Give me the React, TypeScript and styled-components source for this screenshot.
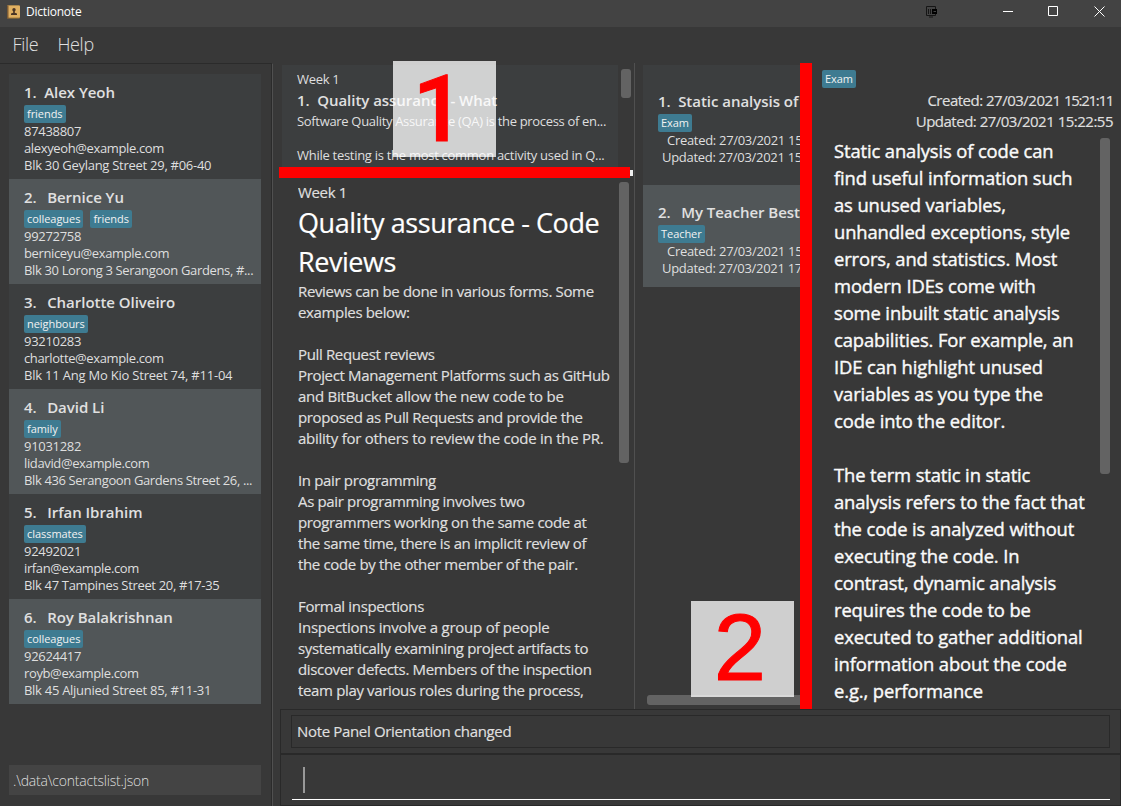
import React from "react";
import styled, { createGlobalStyle, css } from "styled-components";

const Global = createGlobalStyle`
  * { box-sizing: border-box; }
  body { margin: 0; background: #383838; overflow: hidden; }
`;

const Window = styled.div`
  width: 1121px;
  height: 806px;
  display: flex;
  flex-direction: column;
  background: #383838;
  color: #dfdfdf;
  font-family: "Open Sans", "Noto Sans", sans-serif;
  overflow: hidden;
  white-space: pre;
`;

const TitleBar = styled.header`
  height: 27px;
  flex: none;
  display: flex;
  align-items: center;
  background: #434343;
  padding: 0 16px 4px 6px;
`;

const AppTitle = styled.span`
  margin-left: 6px;
  font-size: 12px;
  line-height: 16px;
  color: #fff;
  letter-spacing: -0.22px;
`;

const WindowControls = styled.div`
  margin: -2px 0 0 auto;
  display: flex;
  align-items: center;
`;

const MenuBar = styled.nav`
  height: 36px;
  flex: none;
  display: flex;
  align-items: center;
  gap: 19px;
  padding: 0 13px 2px 12.5px;
  font-size: 18px;
  font-weight: 300;
  letter-spacing: -0.3px;
  color: #e0e0e0;
`;

const Body = styled.div`
  flex: 1;
  min-height: 0;
  display: flex;
`;

const Sidebar = styled.aside`
  width: 273px;
  flex: none;
  display: flex;
  flex-direction: column;
  justify-content: space-between;
  padding: 10px 11px 11px 9px;
  border-top: 1px solid #2b2b2b;
  border-right: 1px solid #505050;
  box-shadow: inset -1px 0 #2b2b2b;
`;

const Card = styled.article<{ $alt?: boolean; $height: number; $top: number }>`
  height: ${(p) => p.$height}px;
  padding: ${(p) => p.$top}px 0 0 15px;
  background: ${(p) => (p.$alt ? "#515658" : "#3c3e3f")};
  overflow: hidden;
`;

const CardTitle = styled.div<{ $gap?: number }>`
  margin-top: ${(p) => p.$gap ?? 0}px;
  height: 22px;
  font-size: 15px;
  line-height: 18px;
  font-weight: 600;
  letter-spacing: -0.03px;
  color: #e0e0e0;
`;

const IndexLabel = styled.span<{ $narrow: boolean }>`
  margin-right: ${(p) => (p.$narrow ? 7.5 : 10.5)}px;
`;

const Index = ({ n }: { n: number }) => <IndexLabel $narrow={n === 1}>{n}.</IndexLabel>;

const Tags = styled.div`
  display: flex;
  gap: 7px;
  height: 18px;
`;

const Tag = styled.span`
  height: 18px;
  padding: 0 3px;
  border-radius: 2px;
  background: #3e7b91;
  color: #f2f2f2;
  font-size: 11px;
  line-height: 18px;
  letter-spacing: -0.05px;
`;

const Small = styled.div<{ $indent?: number; $tracking?: number }>`
  padding-left: ${(p) => p.$indent ?? 0}px;
  height: 17px;
  font-size: 13px;
  line-height: 17px;
  letter-spacing: ${(p) => p.$tracking ?? -0.3}px;
`;

const FilePath = styled.div`
  height: 30px;
  padding-left: 4px;
  background: #444;
  font-size: 14px;
  line-height: 32px;
  font-weight: 300;
  letter-spacing: -0.2px;
`;

const Main = styled.main`
  flex: 1;
  min-width: 0;
  display: flex;
  flex-direction: column;
  padding-left: 6px;
`;

const Panels = styled.div`
  height: 646px;
  flex: none;
  display: flex;
`;

const ContentPanel = styled.section`
  width: 356px;
  flex: none;
  display: flex;
  flex-direction: column;
  border-right: 1px solid #505050;
`;

const ContentList = styled.div`
  position: relative;
  height: 104px;
  flex: none;
  display: flex;
  justify-content: space-between;
  padding: 2px 3px 0 3px;
`;

const ContentCard = styled.article`
  width: 336px;
  padding: 6px 0 0 15px;
  background: #3c3e3f;
`;

const Thumb = styled.div<{ $w: number; $h: number; $top?: number }>`
  width: ${(p) => p.$w}px;
  height: ${(p) => p.$h}px;
  margin-top: ${(p) => p.$top ?? 0}px;
  flex: none;
  border-radius: 3px;
  background: #636363;
`;

const Splitter = styled.div<{ $vertical?: boolean }>`
  flex: none;
  background: #f00;
  ${(p) =>
    p.$vertical
      ? css`
          width: 12px;
        `
      : css`
          width: 351px;
          height: 11px;
          position: relative;
          &::after {
            content: "";
            position: absolute;
            left: 351px;
            top: 3px;
            width: 3px;
            height: 6px;
            background: #f0f0f0;
          }
        `}
`;

const Reader = styled.div`
  flex: 1;
  min-height: 0;
  display: flex;
  padding: 4px 5px 0 19px;
`;

const ReaderText = styled.div`
  width: 321px;
  overflow: hidden;
  font-size: 15px;
  line-height: 21px;
  letter-spacing: -0.35px;
  -webkit-text-stroke: 0.2px currentColor;
`;

const Loose = styled.span`
  letter-spacing: -0.25px;
`;

const Heading = styled.h1`
  margin: 0;
  padding: 1px 0 0;
  font-size: 27px;
  line-height: 38.5px;
  font-weight: 400;
  letter-spacing: -0.45px;
  color: #fff;
`;

const Callout = styled.div<{
  $left: number;
  $top: number;
  $face: string;
  $weight: number;
  $size: number;
  $line: number;
  $inset: number;
}>`
  position: absolute;
  left: ${(p) => p.$left}px;
  top: ${(p) => p.$top}px;
  width: 103px;
  height: 96px;
  z-index: 2;
  padding-right: ${(p) => p.$inset}px;
  background: rgba(255, 255, 255, 0.76);
  color: #f00;
  font-family: ${(p) => p.$face}, sans-serif;
  font-size: ${(p) => p.$size}px;
  font-weight: ${(p) => p.$weight};
  line-height: ${(p) => p.$line}px;
  text-align: center;
  -webkit-text-stroke: 1px #f00;
`;

const NotePanel = styled.section`
  position: relative;
  width: 165px;
  flex: none;
  display: flex;
  flex-direction: column;
  justify-content: space-between;
  padding: 2px 0 4px 8px;
`;

const HorizontalThumb = styled.div`
  height: 10px;
  margin-left: 4px;
  border-radius: 3px 0 0 3px;
  background: #636363;
`;

const Detail = styled.section`
  flex: 1;
  display: flex;
  flex-direction: column;
  padding: 7px 8px 0 10px;
`;

const Meta = styled.div`
  padding-top: 2px;
  text-align: right;
  font-size: 15px;
  line-height: 21px;
  letter-spacing: -0.5px;
  -webkit-text-stroke: 0.2px currentColor;
`;

const Tight = styled.span`
  letter-spacing: -1.3px;
`;

const NoteScroll = styled.div`
  display: flex;
  justify-content: space-between;
  padding: 6px 3px 0 12px;
`;

const NoteText = styled.div`
  margin-top: -1px;
  font-size: 18.4px;
  line-height: 27px;
  letter-spacing: -0.12px;
  color: #fafafa;
  -webkit-text-stroke: 0.4px currentColor;
`;

const Console = styled.footer`
  flex: 1;
  margin-left: 1px;
  display: flex;
  flex-direction: column;
  border: 1px solid #292929;
`;

const Result = styled.div`
  height: 44px;
  padding: 5px 10px;
  border-bottom: 1px solid #292929;
`;

const ResultText = styled.div`
  height: 33px;
  padding-left: 5px;
  border: 1px solid #292929;
  font-size: 15px;
  line-height: 31px;
  letter-spacing: -0.34px;
  -webkit-text-stroke: 0.2px currentColor;
`;

const Command = styled.div`
  flex: 1;
  border-top: 1px solid #292929;
  padding: 0 10px 5px 11px;
  display: flex;
`;

const CommandField = styled.div`
  flex: 1;
  padding: 12px 0 0 11px;
  border-bottom: 1px solid #fff;
`;

const Caret = styled.div`
  width: 2px;
  height: 26px;
  background: #989898;
`;

interface Contact {
  name: string;
  tags: string[];
  phone: string;
  email: string;
  address: string;
  tracking?: number;
}

const contacts: Contact[] = [
  { name: "Alex Yeoh", tags: ["friends"], phone: "87438807", email: "alexyeoh@example.com", address: "Blk 30 Geylang Street 29, #06-40", tracking: -0.27 },
  { name: "Bernice Yu", tags: ["colleagues", "friends"], phone: "99272758", email: "berniceyu@example.com", address: "Blk 30 Lorong 3 Serangoon Gardens, #...", tracking: -0.35 },
  { name: "Charlotte Oliveiro", tags: ["neighbours"], phone: "93210283", email: "charlotte@example.com", address: "Blk 11 Ang Mo Kio Street 74, #11-04", tracking: -0.21 },
  { name: "David Li", tags: ["family"], phone: "91031282", email: "lidavid@example.com", address: "Blk 436 Serangoon Gardens Street 26, ...", tracking: -0.37 },
  { name: "Irfan Ibrahim", tags: ["classmates"], phone: "92492021", email: "irfan@example.com", address: "Blk 47 Tampines Street 20, #17-35", tracking: -0.33 },
  { name: "Roy Balakrishnan", tags: ["colleagues"], phone: "92624417", email: "royb@example.com", address: "Blk 45 Aljunied Street 85, #11-31", tracking: -0.28 },
];

const noteText = `Static analysis of code can
find useful information such
as unused variables,
unhandled exceptions, style
errors, and statistics. Most
modern IDEs come with
some inbuilt static analysis
capabilities. For example, an
IDE can highlight unused
variables as you type the
code into the editor.

The term static in static
analysis refers to the fact that
the code is analyzed without
executing the code. In
contrast, dynamic analysis
requires the code to be
executed to gather additional
information about the code
e.g., performance`;

const BookIcon = () => (
  <svg width="14" height="14" viewBox="0 0 14 14">
    <rect x="1" y="0.500" width="13" height="13" rx="1" fill="#a87a35" />
    <rect x="1" y="0.500" width="13" height="12" rx="1" fill="#e0b062" />
    <rect x="1" y="0.500" width="1.500" height="13" fill="#7a5a35" />
    <circle cx="8" cy="4.800" r="1.700" fill="#4a3525" />
    <path d="M7.200 6h1.600v1.800l2.200.7V10H5V8.500l2.200-.7z" fill="#4a3525" />
  </svg>
);

const ControlIcons = () => (
  <svg width="182" height="16" viewBox="0 0 182 16" fill="none">
    <path d="M12.500 6V3.500H3.500V12.500H12.500V11M6 14H10" stroke="#161616" />
    <path d="M5.500 6V11M7.500 6V11" stroke="#161616" />
    <path d="M9 6h5v5H9z" fill="#000" />
    <path d="M10.500 8.500h2.500" stroke="#434343" />
    <path d="M80 8.500H90M125.500 3.500h9v9h-9zM171.500 3.500l10 10M181.500 3.500l-10 10" stroke="#fff" />
  </svg>
);

export default function App() {
  return (
    <Window>
      <Global />
      <TitleBar>
        <BookIcon />
        <AppTitle>Dictionote</AppTitle>
        <WindowControls>
          <ControlIcons />
        </WindowControls>
      </TitleBar>
      <MenuBar>
        <span>File</span>
        <span>Help</span>
      </MenuBar>
      <Body>
        <Sidebar>
          <div>
            {contacts.map((c, i) => (
              <Card key={c.name} $alt={i % 2 === 1} $height={105} $top={9}>
                <CardTitle>
                  <Index n={i + 1} />
                  {c.name}
                </CardTitle>
                <Tags>
                  {c.tags.map((t) => (
                    <Tag key={t}>{t}</Tag>
                  ))}
                </Tags>
                <Small>{c.phone}</Small>
                <Small $tracking={-0.37}>{c.email}</Small>
                <Small $tracking={c.tracking}>{c.address}</Small>
              </Card>
            ))}
          </div>
          <FilePath>.\data\contactslist.json</FilePath>
        </Sidebar>
        <Main>
          <Panels>
            <ContentPanel>
              <ContentList>
                <ContentCard>
                  <Small>Week 1</Small>
                  <CardTitle $gap={3}>
                    <Index n={1} />
                    Quality assurance - What
                  </CardTitle>
                  <Small $tracking={-0.32}>Software Quality Assurance (QA) is the process of en...</Small>
                  <Small> </Small>
                  <Small $tracking={-0.28}>While testing is the most common activity used in Q...</Small>
                </ContentCard>
                <Thumb $w={10} $h={29} $top={4} />
                <Callout $left={114} $top={-2} $face="Roboto" $weight={500} $size={92} $line={97} $inset={11}>
                  1
                </Callout>
              </ContentList>
              <Splitter />
              <Reader>
                <ReaderText>
                  <div>Week 1</div>
                  <Heading>{"Quality assurance - Code\nReviews"}</Heading>
                  {`Reviews can be done in various forms. Some
examples below:

Pull Request reviews
Project Management Platforms such as GitHub
`}
                  <Loose>and BitBucket allow the new code to be</Loose>
                  {`
proposed as Pull Requests and provide the
`}
                  <Loose>ability for others to review the code in the PR.</Loose>
                  {`

In pair programming
As pair programming involves two
programmers working on the same code at
the same time, there is an implicit review of
the code by the other member of the pair.

Formal inspections
`}
                  <Loose>Inspections involve a group of people</Loose>
                  {`
systematically examining project artifacts to
discover defects. Members of the inspection
team play various roles during the process,`}
                </ReaderText>
                <Thumb $w={10} $h={281} />
              </Reader>
            </ContentPanel>
            <NotePanel>
              <div>
                <Card $height={120} $top={27}>
                  <CardTitle>
                    <Index n={1} />
                    Static analysis of
                  </CardTitle>
                  <Tags><Tag>Exam</Tag></Tags>
                  <Small $indent={9}>Created: 27/03/2021 15:21:11</Small>
                  <Small $indent={4}>Updated: 27/03/2021 15:22:55</Small>
                </Card>
                <Card $alt $height={102} $top={18}>
                  <CardTitle>
                    <Index n={2} />
                    My Teacher Best
                  </CardTitle>
                  <Tags><Tag>Teacher</Tag></Tags>
                  <Small $indent={9}>Created: 27/03/2021 15:21:11</Small>
                  <Small $indent={4}>Updated: 27/03/2021 17:22:55</Small>
                </Card>
              </div>
              <HorizontalThumb />
              <Callout
                $left={56}
                $top={538}
                $face='"Liberation Sans"'
                $weight={400}
                $size={94}
                $line={93}
                $inset={5}
              >
                2
              </Callout>
            </NotePanel>
            <Splitter $vertical />
            <Detail>
              <Tags><Tag>Exam</Tag></Tags>
              <Meta>
                <div>Created: 27/03/2021 <Tight>15:21:11</Tight></div>
                <div>Updated: 27/03/2021 15:22:55</div>
              </Meta>
              <NoteScroll>
                <NoteText>{noteText}</NoteText>
                <Thumb $w={10} $h={336} />
              </NoteScroll>
            </Detail>
          </Panels>
          <Console>
            <Result>
              <ResultText>Note Panel Orientation changed</ResultText>
            </Result>
            <Command>
              <CommandField>
                <Caret />
              </CommandField>
            </Command>
          </Console>
        </Main>
      </Body>
    </Window>
  );
}
